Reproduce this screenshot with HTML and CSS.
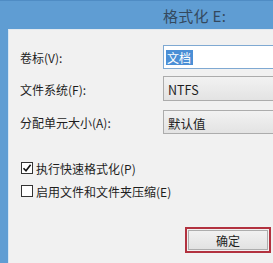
FILE: index.html
```html
<!DOCTYPE html>
<html lang="zh-CN">
<head>
<meta charset="utf-8">
<link rel="stylesheet" href="styles.css">
</head>
<body>
<div class="window">
  <div class="titlebar"><span class="title">格式化 E:</span></div>
  <div class="frame">
    <div class="content">
      <div class="row row-volume">
        <span class="label">卷标(V):</span>
        <div class="input"><span class="sel">文档</span></div>
      </div>
      <div class="row row-fs">
        <span class="label">文件系统(F):</span>
        <div class="select">NTFS</div>
      </div>
      <div class="row row-alloc">
        <span class="label">分配单元大小(A):</span>
        <div class="select">默认值</div>
      </div>
      <div class="check check-quick">
        <span class="box"><svg width="10" height="10" viewBox="0 0 10 10"><path d="M1.5 5.2 L4 7.8 L8.6 1.8" fill="none" stroke="#111" stroke-width="1.6"/></svg></span>
        <span class="ctext">执行快速格式化(P)</span>
      </div>
      <div class="check check-compress">
        <span class="box"></span>
        <span class="ctext">启用文件和文件夹压缩(E)</span>
      </div>
      <div class="actions">
        <div class="highlight"><div class="button">确定</div></div>
      </div>
    </div>
  </div>
</div>
</body>
</html>
```
FILE: styles.css
```css
html, body {
  margin: 0;
  padding: 0;
}
body {
  width: 273px;
  height: 263px;
  overflow: hidden;
  font-family: "Noto Sans CJK SC", "Noto Sans", sans-serif;
  font-size: 12px;
  color: #1e1e1e;
  background: #f0f0f0;
}
.window {
  display: flex;
  flex-direction: column;
  height: 263px;
}
.titlebar {
  height: 29px;
  background: #5f9dd3;
  border-top: 1px solid #4f8cc4;
  box-sizing: border-box;
  display: flex;
  align-items: center;
  padding-left: 163px;
}
.title {
  font-size: 15px;
  color: #34495e;
  line-height: 1;
  letter-spacing: 0.3px;
}
.frame {
  flex: 1;
  display: flex;
  background: #5f9dd3;
  padding-left: 8px;
}
.content {
  flex: 1;
  background: #f1f1f1;
  border-left: 1px solid #d6e6f4;
  border-top: 1px solid #e2e9ef;
  padding-left: 11px;
  display: flex;
  flex-direction: column;
}
.row {
  display: flex;
  align-items: center;
}
.label {
  width: 143px;
  line-height: 14px;
  padding-top: 2px;
}
.row-volume {
  margin-top: 15px;
  height: 24px;
}
.row-fs {
  margin-top: 7px;
  height: 25px;
}
.row-alloc {
  margin-top: 9px;
  height: 24px;
}
.input {
  flex: 1;
  height: 24px;
  box-sizing: border-box;
  border: 1px solid #7fa9d2;
  border-right: none;
  background: #fff;
  display: flex;
  align-items: center;
  padding-left: 2px;
}
.sel {
  background: #4b8fd6;
  color: #fff;
  line-height: 15px;
  height: 15px;
  padding: 0 2px 0 1px;
}
.select {
  flex: 1;
  height: 100%;
  box-sizing: border-box;
  border: 1px solid #acacac;
  border-right: none;
  background: linear-gradient(#f2f2f2, #e3e3e3);
  display: flex;
  align-items: center;
  padding-left: 4px;
  padding-top: 2px;
  font-size: 12.5px;
}
.check {
  display: flex;
  align-items: center;
  height: 16px;
}
.check-quick {
  margin-top: 26px;
}
.check-compress {
  margin-top: 7px;
}
.box {
  width: 12px;
  height: 12px;
  box-sizing: border-box;
  border: 1px solid #333;
  background: #fff;
  margin-left: 1px;
  display: flex;
  align-items: center;
  justify-content: center;
}
.ctext {
  margin-left: 3px;
  line-height: 14px;
  padding-top: 2px;
}
.actions {
  display: flex;
  margin-top: 28px;
  padding-left: 165px;
}
.highlight {
  width: 86px;
  height: 26px;
  box-sizing: border-box;
  border: 2px solid #b2323f;
  padding: 1px;
  display: flex;
}
.button {
  flex: 1;
  border: 1px solid #adadad;
  background: linear-gradient(#f1f1f1, #e2e2e2);
  display: flex;
  align-items: center;
  justify-content: center;
  padding-top: 1px;
}
```
